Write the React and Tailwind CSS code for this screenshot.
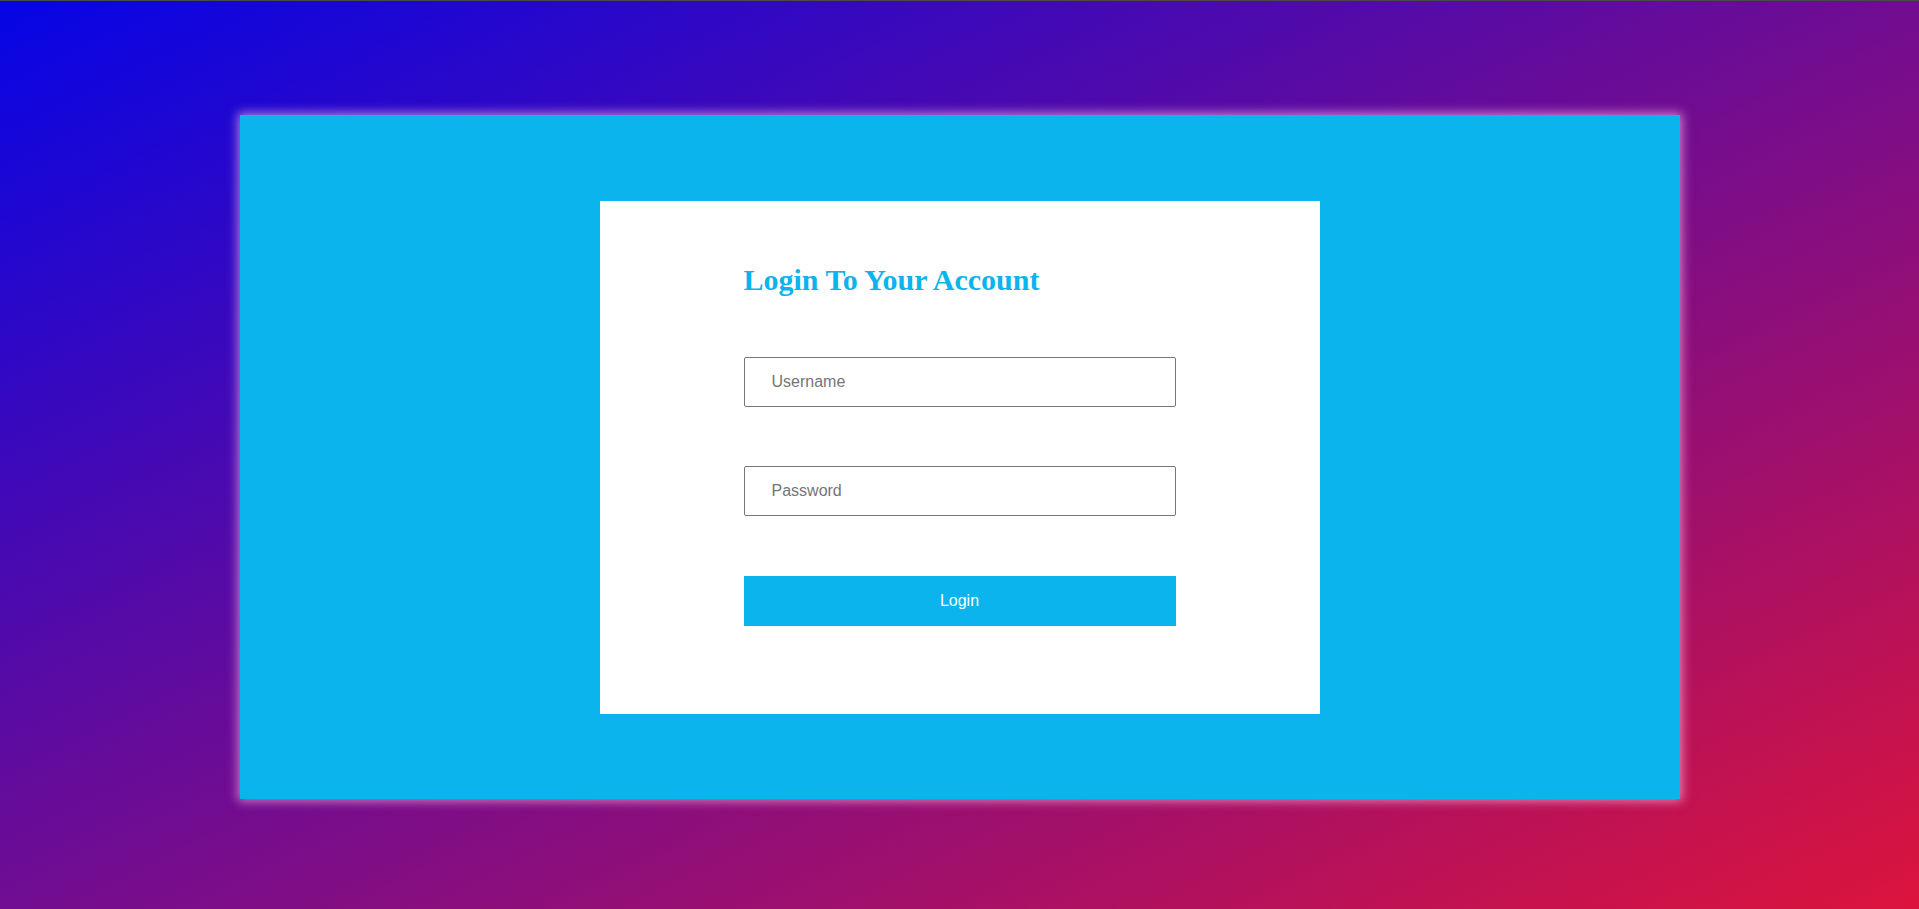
import React from "react";

const App = () => {
  return (
    <div className="min-h-[909px] w-full border-t border-[#4a4a4a] bg-[linear-gradient(to_bottom_right,#0505e6,#dc143c)] pt-[114px] flex justify-center">
      {/* Cyan frame */}
      <div className="w-[1440px] h-[684px] bg-[#0bb4ec] shadow-[0_0_10px_2px_rgba(255,190,230,0.65)] flex items-center justify-center">
        {/* Login card */}
        <div className="w-[720px] bg-white pt-[63px] pb-[88px] flex justify-center">
          <form className="w-[432px] flex flex-col" onSubmit={(e) => e.preventDefault()}>
            <h1 className="h-[32px] text-[30px] leading-[32px] font-bold text-[#0bb4ec] font-['Liberation_Serif',serif]">
              Login To Your Account
            </h1>
            <input
              type="text"
              placeholder="Username"
              className="mt-[61px] h-[50px] w-full border border-[#767676] rounded-[2px] pl-[27px] pr-3 text-[16px] text-gray-800 placeholder:text-[#757575] font-['Liberation_Sans',Arial,sans-serif] outline-none"
            />
            <input
              type="password"
              placeholder="Password"
              className="mt-[59px] h-[50px] w-full border border-[#767676] rounded-[2px] pl-[27px] pr-3 text-[16px] text-gray-800 placeholder:text-[#757575] font-['Liberation_Sans',Arial,sans-serif] outline-none"
            />
            <button
              type="submit"
              className="mt-[60px] h-[50px] w-full bg-[#0bb4ec] text-white text-[16px] font-['Liberation_Sans',Arial,sans-serif]"
            >
              Login
            </button>
          </form>
        </div>
      </div>
    </div>
  );
};

export default App;
